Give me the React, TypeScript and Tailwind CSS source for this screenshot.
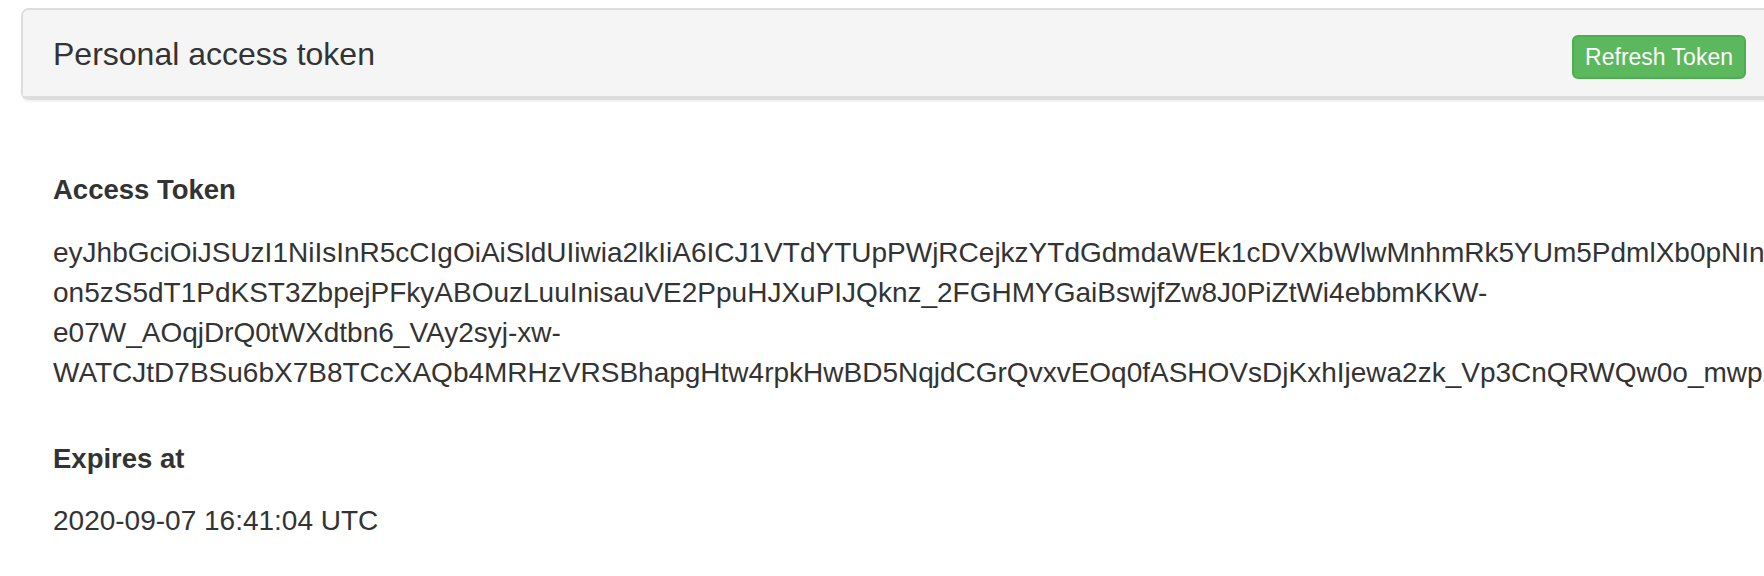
import React from 'react';

const tokenHeader =
  'eyJhbGciOiJSUzI1NiIsInR5cCIgOiAiSldUIiwia2lkIiA6ICJ1VTdYTUpPWjRCejkzYTdGdmdaWEk1cDVXbWlwMnhmRk5YUm5PdmlXb0pNIn0';
const tokenPayload =
  'eyJqdGkiOiI0ZDA1YzE3Zi0zYjQxIiwiZXhwIjoxNTk5NDk2ODY0LCJuYmYiOjAsImlhdCI6MTU5OTQ5NjU2NCwiaXNzIjoiaHR0cHM6Ly9hdXRoLmV4YW1wbGUuY29tIn0';
const tokenSignature = [
  'Hk3bQ9sRwTz1',
  'on5zS5dT1PdKST3ZbpejPFkyABOuzLuuInisauVE2PpuHJXuPIJQknz_2FGHMYGaiBswjfZw8J0PiZtWi4ebbmKKW',
  'e07W_AOqjDrQ0tWXdtbn6_VAy2syj',
  'xw',
  'WATCJtD7BSu6bX7B8TCcXAQb4MRHzVRSBhapgHtw4rpkHwBD5NqjdCGrQvxvEOq0fASHOVsDjKxhIjewa2zk_Vp3CnQRWQw0o_mwp2Yq8LrTnA5cZ1',
].join('-');

const accessToken = `${tokenHeader}.${tokenPayload}.${tokenSignature}`;

export default function App() {
  return (
    <div className="w-full overflow-hidden bg-white text-[#333] font-['Liberation_Sans',Helvetica,Arial,sans-serif] min-h-[576px]">
      <div className="pt-[8px] pl-[21px]">
        <div className="w-[1757px] rounded-[8px] border-2 border-[#ddd] bg-white shadow-[0_2px_2px_rgba(0,0,0,0.05)]">
          <div className="flex items-start justify-between rounded-t-[6px] border-b-2 border-[#ddd] bg-[#f5f5f5] px-[30px] pt-[25px] pb-[17px]">
            <h3 className="mt-[1px] text-[32px] leading-[36px] font-normal">Personal access token</h3>
            <button className="rounded-[6px] border-2 border-[#4cae4c] bg-[#5cb85c] px-[11px] py-[2px] text-[23px] leading-[36px] text-white">
              Refresh Token
            </button>
          </div>
        </div>
      </div>

      <dl className="mt-[70px] pl-[53px] text-[28px] leading-[40px]">
        <dt className="text-[27.5px] font-bold">Access Token</dt>
        <dd className="mt-[22.5px] w-[1200px]">{accessToken}</dd>
        <dt className="mt-[46.6px] text-[27.5px] font-bold">Expires at</dt>
        <dd className="mt-[22.4px]">2020-09-07 16:41:04 UTC</dd>
      </dl>
    </div>
  );
}
